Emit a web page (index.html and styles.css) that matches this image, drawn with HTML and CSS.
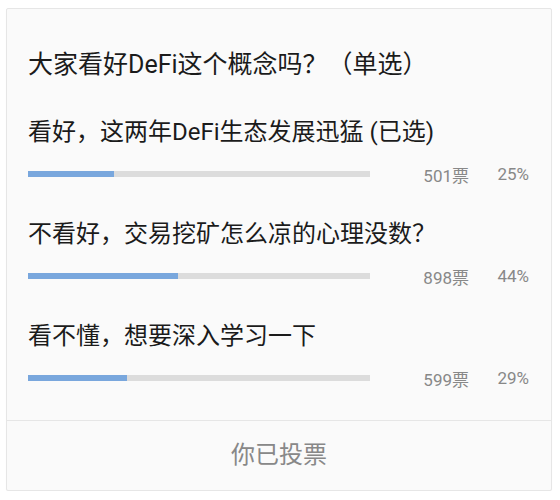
FILE: index.html
```html
<!DOCTYPE html>
<html lang="zh-CN">
<head>
<meta charset="utf-8">
<link rel="stylesheet" href="styles.css">
</head>
<body>
<div class="card">
  <div class="body">
    <div class="title">大家看好DeFi这个概念吗？（单选）</div>
    <div class="options">
      <div class="option">
        <div class="label">看好，这两年DeFi生态发展迅猛 (已选)</div>
        <div class="row">
          <div class="track"><div class="fill" style="width:25%"></div></div>
          <div class="count">501票</div>
          <div class="pct">25%</div>
        </div>
      </div>
      <div class="option">
        <div class="label">不看好，交易挖矿怎么凉的心理没数？</div>
        <div class="row">
          <div class="track"><div class="fill" style="width:44%"></div></div>
          <div class="count">898票</div>
          <div class="pct">44%</div>
        </div>
      </div>
      <div class="option">
        <div class="label">看不懂，想要深入学习一下</div>
        <div class="row">
          <div class="track"><div class="fill" style="width:29%"></div></div>
          <div class="count">599票</div>
          <div class="pct">29%</div>
        </div>
      </div>
    </div>
  </div>
  <div class="footer">你已投票</div>
</div>
</body>
</html>
```
FILE: styles.css
```css
html, body {
  margin: 0;
  padding: 0;
  background: #ffffff;
}
body {
  font-family: Roboto, "Noto Sans CJK SC", sans-serif;
  color: #1b1b1b;
}
.card {
  box-sizing: border-box;
  width: 546px;
  margin: 8px 0 0 6px;
  background: #fafafa;
  border: 1px solid #e6e6e6;
  border-radius: 2px;
  box-shadow: 0 1px 1px rgba(0, 0, 0, 0.04);
}
.body {
  padding: 40px 22px 30px 21px;
}
.title {
  font-size: 25px;
  line-height: 32px;
  white-space: nowrap;
}
.options {
  display: flex;
  flex-direction: column;
  gap: 32px;
  margin-top: 35px;
}
.option {
  display: flex;
  flex-direction: column;
  gap: 14px;
}
.label {
  font-size: 24px;
  line-height: 32px;
  white-space: nowrap;
}
.row {
  display: flex;
  align-items: center;
  height: 24px;
}
.track {
  width: 342px;
  height: 6px;
  background: #dcdcdc;
}
.fill {
  height: 100%;
  background: #79a7dd;
}
.count {
  width: 99px;
  text-align: right;
  font-size: 17px;
  color: #888888;
}
.pct {
  width: 60px;
  text-align: right;
  font-size: 17px;
  color: #888888;
}
.footer {
  border-top: 1px solid #e6e6e6;
  height: 70px;
  display: flex;
  align-items: center;
  justify-content: center;
  padding-bottom: 6px;
  box-sizing: border-box;
  font-size: 24px;
  color: #888888;
}
```
